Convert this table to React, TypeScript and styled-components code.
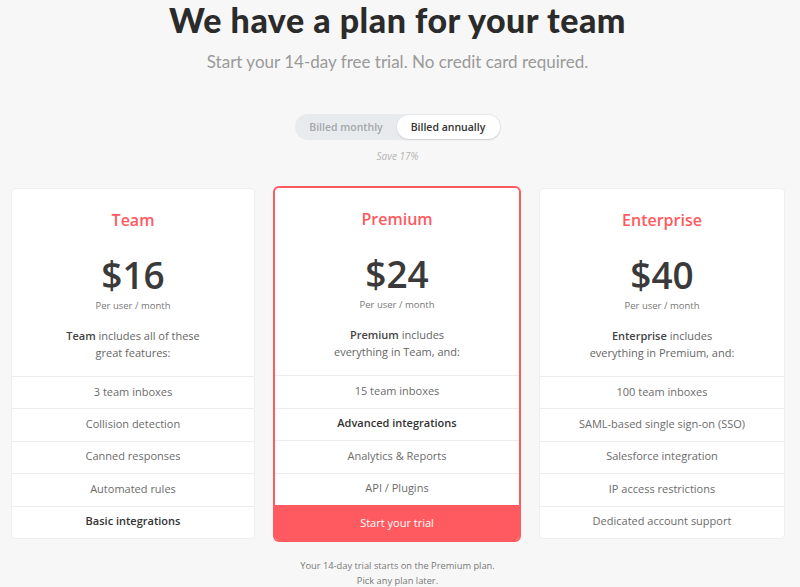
import React from "react";
import styled, { createGlobalStyle } from "styled-components";

const Global = createGlobalStyle`
  html, body { margin: 0; padding: 0; background: #f7f7f7; }
  body { font-family: "Open Sans", "Liberation Sans", sans-serif; -webkit-font-smoothing: antialiased; }
  * { box-sizing: border-box; }
`;

const RED = "#ff5a5f";

const Page = styled.div`
  width: 795px;
  display: flex;
  flex-direction: column;
  align-items: center;
  text-align: center;
`;

const Title = styled.h1`
  margin: 0;
  font-family: Lato, "Open Sans", sans-serif;
  font-weight: 900;
  font-size: 34px;
  line-height: 40px;
  color: #2b2b2b;
  letter-spacing: 0.5px;
`;

const Subtitle = styled.p`
  margin: 10px 0 0;
  font-family: Lato, "Open Sans", sans-serif;
  font-weight: 400;
  font-size: 17px;
  line-height: 24px;
  color: #9a9a9a;
  letter-spacing: 0;
`;

const Toggle = styled.div`
  margin-top: 40px;
  width: 206px;
  height: 26px;
  border-radius: 13px;
  background: #e8ebee;
  display: grid;
  grid-template-columns: 1fr 103px;
  padding: 1px;
`;

const ToggleOption = styled.div<{ $active?: boolean }>`
  border-radius: 12px;
  display: flex;
  align-items: center;
  justify-content: center;
  font-size: 10.5px;
  font-weight: 600;
  color: ${(p) => (p.$active ? "#333" : "#a3a7ab")};
  background: ${(p) => (p.$active ? "#fff" : "transparent")};
  box-shadow: ${(p) => (p.$active ? "0 1px 2px rgba(0,0,0,0.12)" : "none")};
`;

const Save = styled.div`
  margin-top: 9px;
  font-size: 10px;
  line-height: 14px;
  font-style: italic;
  color: #b5b5b5;
`;

const Cards = styled.div`
  margin-top: 23px;
  align-self: stretch;
  padding-left: 11px;
  display: grid;
  grid-template-columns: 244px 248px 246px;
  column-gap: 18px;
  align-items: start;
`;

const Card = styled.div<{ $featured?: boolean }>`
  margin-top: ${(p) => (p.$featured ? "0" : "2px")};
  background: #fff;
  border: ${(p) => (p.$featured ? `2px solid ${RED}` : "1px solid #eeeeee")};
  border-radius: ${(p) => (p.$featured ? "6px" : "4px")};
  overflow: hidden;
  display: flex;
  flex-direction: column;
`;

const CardHead = styled.div`
  height: 187px;
  padding-top: 21px;
  display: flex;
  flex-direction: column;
  align-items: center;
`;

const PlanName = styled.div`
  font-size: 16px;
  line-height: 20px;
  font-weight: 600;
  color: ${RED};
`;

const Price = styled.div`
  margin-top: 23px;
  font-size: 37px;
  line-height: 44px;
  font-weight: 600;
  color: #3a3a3a;
`;

const Per = styled.div`
  margin-top: 2px;
  font-size: 9.5px;
  line-height: 14px;
  color: #777;
`;

const Desc = styled.div`
  margin-top: 14px;
  font-size: 11px;
  line-height: 17px;
  color: #666;
  white-space: nowrap;
  b { color: #444; font-weight: 600; }
`;

const Row = styled.div<{ $bold?: boolean; $h: number }>`
  height: ${(p) => p.$h}px;
  padding-bottom: 3px;
  border-top: 1px solid #ececec;
  display: flex;
  align-items: center;
  justify-content: center;
  font-size: 11px;
  color: ${(p) => (p.$bold ? "#333" : "#6c6c6c")};
  font-weight: ${(p) => (p.$bold ? 600 : 400)};
`;

const CTA = styled.button`
  height: 35px;
  padding-bottom: 2px;
  border: none;
  margin: 0;
  background: ${RED};
  color: #fff;
  font-family: inherit;
  font-size: 11px;
  cursor: pointer;
`;

const Footer = styled.div`
  margin-top: 16px;
  font-size: 9.3px;
  line-height: 15px;
  color: #777;
`;

type Plan = {
  name: string;
  price: string;
  lead: string;
  rest: string;
  line2: string;
  features: { text: string; bold?: boolean }[];
  featured?: boolean;
};

const plans: Plan[] = [
  {
    name: "Team",
    price: "$16",
    lead: "Team",
    rest: " includes all of these",
    line2: "great features:",
    features: [
      { text: "3 team inboxes" },
      { text: "Collision detection" },
      { text: "Canned responses" },
      { text: "Automated rules" },
      { text: "Basic integrations", bold: true },
    ],
  },
  {
    name: "Premium",
    price: "$24",
    lead: "Premium",
    rest: " includes",
    line2: "everything in Team, and:",
    featured: true,
    features: [
      { text: "15 team inboxes" },
      { text: "Advanced integrations", bold: true },
      { text: "Analytics & Reports" },
      { text: "API / Plugins" },
    ],
  },
  {
    name: "Enterprise",
    price: "$40",
    lead: "Enterprise",
    rest: " includes",
    line2: "everything in Premium, and:",
    features: [
      { text: "100 team inboxes" },
      { text: "SAML-based single sign-on (SSO)" },
      { text: "Salesforce integration" },
      { text: "IP access restrictions" },
      { text: "Dedicated account support" },
    ],
  },
];

export default function App() {
  return (
    <>
      <Global />
      <Page>
        <Title>We have a plan for your team</Title>
        <Subtitle>Start your 14-day free trial. No credit card required.</Subtitle>
        <Toggle>
          <ToggleOption>Billed monthly</ToggleOption>
          <ToggleOption $active>Billed annually</ToggleOption>
        </Toggle>
        <Save>Save 17%</Save>
        <Cards>
          {plans.map((p) => (
            <Card key={p.name} $featured={p.featured}>
              <CardHead>
                <PlanName>{p.name}</PlanName>
                <Price>{p.price}</Price>
                <Per>Per user / month</Per>
                <Desc>
                  <b>{p.lead}</b>
                  {p.rest}
                  <br />
                  {p.line2}
                </Desc>
              </CardHead>
              {p.features.map((f) => (
                <Row key={f.text} $bold={f.bold} $h={p.featured ? 32.5 : 32.4}>
                  {f.text}
                </Row>
              ))}
              {p.featured && <CTA>Start your trial</CTA>}
            </Card>
          ))}
        </Cards>
        <Footer>
          Your 14-day trial starts on the Premium plan.
          <br />
          Pick any plan later.
        </Footer>
      </Page>
    </>
  );
}
